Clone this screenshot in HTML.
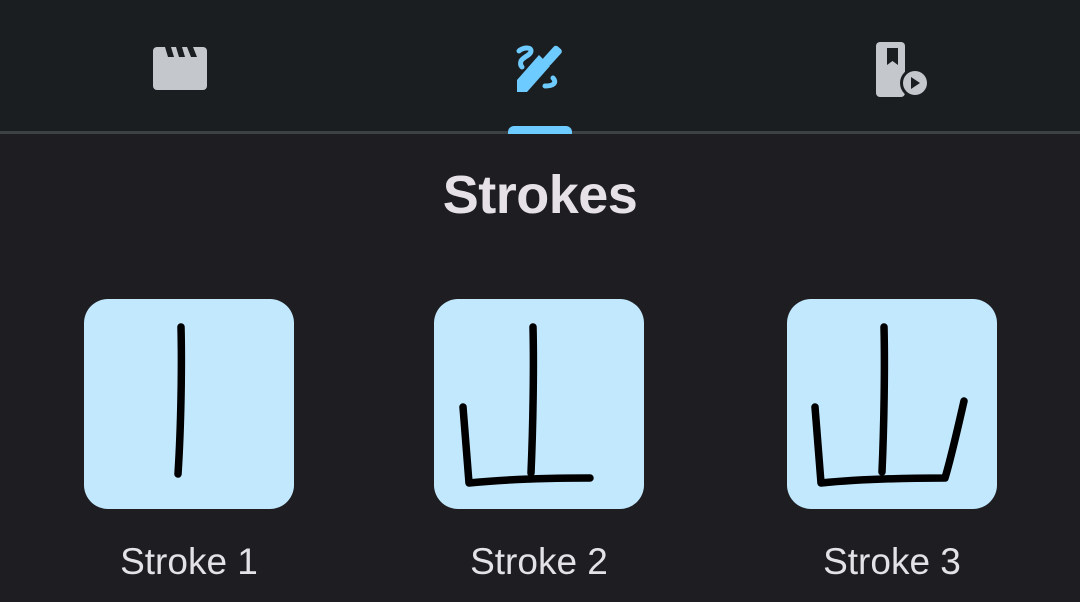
<!DOCTYPE html>
<html><head><meta charset="utf-8"><style>
html,body{margin:0;padding:0;width:1080px;height:602px;overflow:hidden;background:#1e1d21;font-family:"Liberation Sans",Roboto,sans-serif}
.top{position:absolute;left:0;top:0;width:1080px;height:131px;background:#1b1e21}
.div{position:absolute;left:0;top:131px;width:1080px;height:3px;background:#3c4144}
.ind{position:absolute;left:508px;top:126px;width:64px;height:8px;background:#6dcbff;border-radius:6px 6px 0 0}
h1{position:absolute;left:0;width:1080px;top:164px;margin:0;text-align:center;color:#e6e1e6;font-size:54px;font-weight:bold;letter-spacing:-0.5px}
.box{position:absolute;top:299px;width:210px;height:210px;background:#c2e8fe;border-radius:24px}
.lbl{position:absolute;top:541px;width:210px;text-align:center;color:#e3e2e6;font-size:37px}
svg.s{position:absolute;left:0;top:0}
</style></head><body>
<div class="top"></div><div class="div"></div><div class="ind"></div>
<svg class="s" width="1080" height="130">
 <g fill="#c4c8cd">
  <rect x="153" y="47" width="54" height="43" rx="4"/>
  <path d="M165 47h6l3 10h-6zM176 47h6l3 10h-6zM187 47h6l4 10h-6z" fill="#1b1e21"/>
  <rect x="876" y="42" width="29" height="55" rx="4"/>
  <path d="M887 48h11v17l-5.5-4-5.5 4z" fill="#1b1e21"/>
  <circle cx="915" cy="83" r="15" fill="#1b1e21"/>
  <circle cx="915" cy="83" r="12"/>
  <path d="M911 77l9 6-9 6z" fill="#1b1e21"/>
 </g>
 <g fill="#6dcbff">
  <path d="M517 80l22-25 11 11-23 26h-10z"/>
  <rect x="542" y="51" width="21" height="10" rx="3" transform="rotate(-48 552 56)"/>
 </g>
 <g fill="none" stroke="#6dcbff" stroke-width="5" stroke-linecap="round">
  <path d="M519 51c3-3 12-5 12 0c0 4-8 6-10 10c-1 3 0 5 1 6"/>
  <path d="M553 78c3 3 3 8-8 8"/>
 </g>
</svg>
<h1>Strokes</h1>
<div class="box" style="left:84px"></div>
<div class="box" style="left:434px"></div>
<div class="box" style="left:787px"></div>
<svg class="s" width="1080" height="602">
 <g fill="none" stroke="#000" stroke-width="7.5" stroke-linecap="round" stroke-linejoin="round">
  <path d="M181 327c1 40 0 100-3 147"/>
  <path d="M533 327c1 40 0 100-2 146"/>
  <path d="M463 407l6 76c40-4 80-5 121-5"/>
  <path d="M884 327c1 40 0 100-2 145"/>
  <path d="M815 407l6 76c40-4 85-5 124-5c6-20 14-55 19-77"/>
 </g>
</svg>
<div class="lbl" style="left:84px">Stroke 1</div>
<div class="lbl" style="left:434px">Stroke 2</div>
<div class="lbl" style="left:787px">Stroke 3</div>
</body></html>
